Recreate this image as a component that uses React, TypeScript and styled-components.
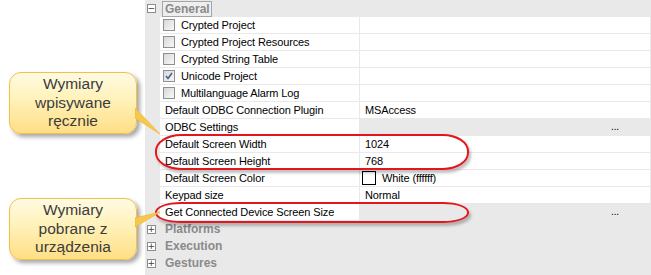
import styled, { createGlobalStyle } from 'styled-components';

const GlobalStyle = createGlobalStyle`
  html, body {
    margin: 0;
    padding: 0;
    background: #ffffff;
  }
  body {
    font-family: "Liberation Sans", Arial, sans-serif;
    font-size: 11px;
    letter-spacing: -0.12px;
    color: #000000;
  }
`;

type Prop = {
  name: string;
  kind: 'check' | 'text' | 'button' | 'color';
  checked?: boolean;
  value?: string;
};

const GENERAL: Prop[] = [
  { name: 'Crypted Project', kind: 'check' },
  { name: 'Crypted Project Resources', kind: 'check' },
  { name: 'Crypted String Table', kind: 'check' },
  { name: 'Unicode Project', kind: 'check', checked: true },
  { name: 'Multilanguage Alarm Log', kind: 'check' },
  { name: 'Default ODBC Connection Plugin', kind: 'text', value: 'MSAccess' },
  { name: 'ODBC Settings', kind: 'button' },
  { name: 'Default Screen Width', kind: 'text', value: '1024' },
  { name: 'Default Screen Height', kind: 'text', value: '768' },
  { name: 'Default Screen Color', kind: 'color', value: 'White (ffffff)' },
  { name: 'Keypad size', kind: 'text', value: 'Normal' },
  { name: 'Get Connected Device Screen Size', kind: 'button' },
];

const COLLAPSED = ['Platforms', 'Execution', 'Gestures'];

const CALLOUTS = [
  {
    id: 1,
    top: 72,
    height: 62,
    lines: ['Wymiary', 'wpisywane', 'ręcznie'],
    tail: 'M0 30 L0 40 L25 56 Z',
    tailTop: 78,
  },
  {
    id: 2,
    top: 198,
    height: 62,
    lines: ['Wymiary', 'pobrane z', 'urządzenia'],
    tail: 'M0 20 L0 29 L25 14 Z',
    tailTop: 198,
  },
];

const App = () => {
  return (
    <>
      <GlobalStyle />
      <Page>
        <LeftSpace />
        <Grid>
          <CategoryRow>
            <Expander>
              <Toggle>−</Toggle>
            </Expander>
            <SelectedLabel>General</SelectedLabel>
          </CategoryRow>
          {GENERAL.map(({ name, kind, checked, value }) => (
            <PropRow key={name}>
              <NameCell $indent={kind === 'check'}>
                {kind === 'check' && (
                  <CheckBox>
                    {checked && (
                      <svg width="10" height="10" viewBox="0 0 10 10">
                        <path
                          d="M2 5 L4 7.5 L8 2"
                          fill="none"
                          stroke="#4a5f8c"
                          strokeWidth="1.6"
                        />
                      </svg>
                    )}
                  </CheckBox>
                )}
                {name}
              </NameCell>
              <ValueCell $button={kind === 'button'}>
                {kind === 'color' && <Swatch />}
                {value}
                {kind === 'button' && <Dots>...</Dots>}
              </ValueCell>
            </PropRow>
          ))}
          {COLLAPSED.map(label => (
            <CategoryRow key={label}>
              <Expander>
                <Toggle>+</Toggle>
              </Expander>
              <CategoryLabel>{label}</CategoryLabel>
            </CategoryRow>
          ))}
        </Grid>

        <Highlight $rx={26} $ry={17} style={{ top: 134, height: 32 }} />
        <Highlight $rx={26} $ry={10} style={{ top: 202, height: 17 }} />

        {CALLOUTS.map(({ id, top, height, lines, tail, tailTop }) => (
          <Callout key={id} style={{ top, height }}>
            <Bubble>
              {lines.map(line => (
                <span key={line}>{line}</span>
              ))}
            </Bubble>
            <Tail
              width="28"
              height="64"
              viewBox="0 0 28 64"
              style={{ top: tailTop - top }}
            >
              <path d={tail} fill="#f6c94e" stroke="#f0b93a" strokeWidth="0.8" />
            </Tail>
          </Callout>
        ))}
      </Page>
    </>
  );
};

const Page = styled.div`
  position: relative;
  display: flex;
  width: 651px;
  height: 275px;
  overflow: hidden;
`;

const LeftSpace = styled.div`
  width: 145px;
  flex-shrink: 0;
  background: #ffffff;
`;

const Grid = styled.div`
  flex: 1;
  display: flex;
  flex-direction: column;
  gap: 1px;
  padding-right: 1px;
  background: #e9e9e9;
`;

const CategoryRow = styled.div`
  display: flex;
  align-items: center;
  height: 16px;
`;

const Expander = styled.div`
  width: 17px;
  display: flex;
  justify-content: center;
  flex-shrink: 0;
`;

const Toggle = styled.div`
  width: 7px;
  height: 7px;
  border: 1px solid #8c8c8c;
  background: #ffffff;
  color: #404040;
  font-size: 9px;
  line-height: 7px;
  text-align: center;
  font-family: "DejaVu Sans", sans-serif;
  margin-left: -5px;
`;

const CategoryLabel = styled.div`
  font-weight: bold;
  font-size: 12px;
  letter-spacing: 0;
  color: #8a8a8a;
  padding-left: 3px;
`;

const SelectedLabel = styled(CategoryLabel)`
  padding: 0 1px 0 2px;
  margin-top: 1px;
  height: 14px;
  line-height: 14px;
  border: 1px solid #a5a5a5;
  background: #eeeeee;
`;

const PropRow = styled.div`
  display: flex;
  height: 16px;
  margin-left: 15px;
  gap: 1px;
`;

const NameCell = styled.div<{ $indent: boolean }>`
  display: flex;
  align-items: center;
  width: 199px;
  flex-shrink: 0;
  padding-left: ${p => (p.$indent ? '3px' : '5px')};
  box-sizing: border-box;
  background: #ffffff;
  white-space: nowrap;
`;

const CheckBox = styled.div`
  width: 12px;
  height: 12px;
  box-sizing: border-box;
  border: 1px solid #8e8f8f;
  background: linear-gradient(135deg, #d8d8d8, #f8f8f8);
  margin-right: 6px;
  display: flex;
  align-items: center;
  justify-content: center;
`;

const ValueCell = styled.div<{ $button: boolean }>`
  flex: 1;
  display: flex;
  align-items: center;
  padding-left: 5px;
  background: ${p => (p.$button ? '#e9e9e9' : '#ffffff')};
  white-space: nowrap;
  position: relative;
`;

const Dots = styled.span`
  position: absolute;
  left: 251px;
  top: 2px;
  font-size: 10px;
`;

const Swatch = styled.span`
  width: 12px;
  height: 12px;
  border: 1px solid #000000;
  background: #ffffff;
  margin: 0 6px 0 -3px;
`;

const Highlight = styled.div<{ $rx: number; $ry: number }>`
  position: absolute;
  left: 155px;
  width: 310px;
  border: 2px solid #e3161e;
  border-radius: ${p => `${p.$rx}px / ${p.$ry}px`};
  box-shadow: 2px 3px 3px rgba(0, 0, 0, 0.25);
  pointer-events: none;
`;

const Callout = styled.div`
  position: absolute;
  left: 9px;
  width: 128px;
`;

const Bubble = styled.div`
  height: 100%;
  box-sizing: border-box;
  display: flex;
  flex-direction: column;
  align-items: center;
  justify-content: center;
  border: 1px solid #f1c04a;
  border-radius: 12px;
  background: linear-gradient(180deg, #fffbe3 0%, #fff1b8 45%, #ffdf86 100%);
  box-shadow: 3px 3px 4px rgba(0, 0, 0, 0.35);
  font-size: 15.5px;
  line-height: 18.5px;
  letter-spacing: 0;
  color: #3c3c3c;
`;

const Tail = styled.svg`
  position: absolute;
  left: 126px;
`;

export default App;
